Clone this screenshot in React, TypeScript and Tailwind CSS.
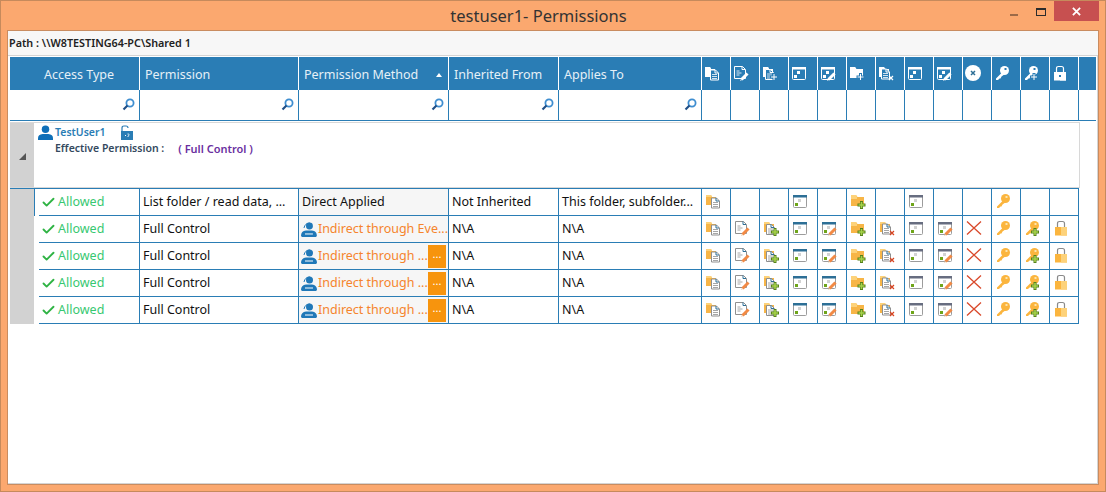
import type { ReactNode } from "react";
import { Check } from "lucide-react";

const BLUE = "#2a7db5";
const headCols = "grid grid-cols-[130px_159px_150px_110px_143px_repeat(13,29px)_17px]";
const rowCols = "grid grid-cols-[106px_159px_150px_110px_143px_repeat(13,29px)]";

type IconProps = { h?: boolean };

function Svg({ children, className = "w-4 h-4" }: { children: ReactNode; className?: string }) {
  return (
    <svg viewBox="0 0 16 16" className={className}>
      {children}
    </svg>
  );
}

function Folder({ h, big }: IconProps & { big?: boolean }) {
  const fill = h ? "#fff" : "#f7b547";
  const top = h ? "#fff" : "#fdd27a";
  return big ? (
    <>
      <path d="M1 2h5l1.500 2H14v9H1z" fill={fill} />
      <path d="M1 2h5l1 2v2H1z" fill={top} />
    </>
  ) : (
    <>
      <path d="M1 2h5l1 2h4v8H1z" fill={fill} />
      <path d="M1 2h5l1 2H1z" fill={top} />
    </>
  );
}

function Doc({ h, x = 6, y = 5 }: IconProps & { x?: number; y?: number }) {
  const line = h ? "#fff" : "#8f8f8f";
  return (
    <g transform={`translate(${x} ${y})`}>
      <path d="M.5.5h5l3 3v7h-8z" fill={h ? BLUE : "#fff"} stroke={line} />
      <path d="M5 .5v3h3" fill="none" stroke={h ? "#fff" : "#2d6f96"} />
      <path d="M2 5h5M2 7h5M2 9h5" stroke={line} strokeWidth=".8" />
    </g>
  );
}

function Plus({ h, x = 8, y = 8 }: IconProps & { x?: number; y?: number }) {
  return (
    <g transform={`translate(${x} ${y})`}>
      <path d="M2.500 0h3v2.500h2.500v3h-2.500v2.500h-3v-2.500h-2.500v-3h2.500z" fill={h ? BLUE : "#55801c"} />
      <path d="M4 1v6M1 4h6" stroke={h ? "#fff" : "#a5d14a"} strokeWidth={h ? 1 : 1.600} fill="none" />
    </g>
  );
}

function Pencil({ h }: IconProps) {
  return (
    <>
      <path d="M8.500 14.500l6-6" stroke={h ? "#fff" : "#f28a45"} strokeWidth="3" />
      <path d="M7 16l1-2 1 1z" fill={h ? "#fff" : "#e9c39c"} />
    </>
  );
}

function FolderDoc({ h }: IconProps) {
  return (
    <Svg>
      <Folder h={h} />
      <Doc h={h} x={6} y={4.500} />
    </Svg>
  );
}

function EditDoc({ h }: IconProps) {
  return (
    <Svg>
      <path d="M1.500 1.500h8l3 3v9h-11z" fill={h ? BLUE : "#fff"} stroke={h ? "#fff" : "#8f8f8f"} />
      <path d="M9 1.500v3h3" fill="none" stroke={h ? "#fff" : "#2d6f96"} />
      <path d="M3.500 6h3M3.500 8h5M3.500 10h3" stroke={h ? "#fff" : "#8f8f8f"} strokeWidth=".8" />
      <Pencil h={h} />
    </Svg>
  );
}

function DocPlus({ h }: IconProps) {
  return (
    <Svg>
      <Folder h={h} />
      <Doc h={h} x={3} y={4} />
      <Plus h={h} x={8} y={8} />
    </Svg>
  );
}

function Win({ h, gray, edit }: IconProps & { gray?: boolean; edit?: boolean }) {
  const frame = h ? "#fff" : "#9c9c9c";
  const bar = h ? "#fff" : gray ? "#676d80" : "#2d6f96";
  return (
    <Svg>
      <rect x="1.500" y="2.500" width="13" height="12" rx="1" fill={h ? BLUE : "#fff"} stroke={frame} />
      <rect x="1" y="2" width="14" height="2.500" fill={bar} />
      <rect x="6" y="6" width="3" height="3" fill={h ? "#fff" : "#d2d2d2"} />
      <rect x="3" y="10" width="3" height="3" fill={h ? "#fff" : "#6fa51a"} />
      {edit && <Pencil h={h} />}
    </Svg>
  );
}

function FolderPlus({ h }: IconProps) {
  return (
    <Svg>
      <Folder h={h} big />
      <Plus h={h} x={7.500} y={8} />
    </Svg>
  );
}

function DocX({ h }: IconProps) {
  return (
    <Svg>
      <Folder h={h} />
      <Doc h={h} x={3} y={3.500} />
      <path d="M11 11l4 4M15 11l-4 4" stroke={h ? "#fff" : "#d8431f"} strokeWidth="1.200" />
    </Svg>
  );
}

function Cross({ h }: IconProps) {
  return h ? (
    <Svg>
      <circle cx="8" cy="8" r="8" fill="#fff" />
      <path d="M6 6l4 4M10 6l-4 4" stroke="#2d6f96" strokeWidth="1.500" />
    </Svg>
  ) : (
    <Svg>
      <path d="M1 1.500l14 13M15 1.500l-14 13" stroke="#d9492b" strokeWidth="1.300" />
    </Svg>
  );
}

function Key({ h, plus }: IconProps & { plus?: boolean }) {
  const fill = h ? "#fff" : "#fbb53e";
  return (
    <Svg>
      <circle cx="10.500" cy="5.500" r="4.500" fill={fill} />
      <path d="M8 7.500L2 13.500v1.500h2l1.500-1.500h1l1-2L11 9z" fill={fill} />
      <rect x="10.500" y="3" width="2" height="2" fill={h ? BLUE : "#fde5ae"} />
      {plus && <Plus h={h} x={7} y={8} />}
    </Svg>
  );
}

function Lock({ h }: IconProps) {
  return (
    <Svg>
      <path d="M4.500 8V3.500q0-2 2-2h3q2 0 2 2V8" fill="none" stroke={h ? "#fff" : "#8a8a8a"} strokeWidth="1.200" />
      <rect x="2" y="7" width="12" height="8.500" fill={h ? "#fff" : "#fbb53e"} />
      <rect x="8" y="7" width="6" height="8.500" fill={h ? "#fff" : "#fdd27a"} />
      {h && <rect x="7" y="10" width="2" height="2" fill={BLUE} />}
    </Svg>
  );
}

function SearchGlyph() {
  return (
    <svg viewBox="0 0 13 13" className="w-[13px] h-[13px]">
      <circle cx="8" cy="5" r="3.600" fill="#fff" stroke="#3f8ed0" strokeWidth="1.800" />
      <path d="M5.500 7.500L1.500 11.500" stroke="#1f4e86" strokeWidth="2.200" />
    </svg>
  );
}

function UserGlyph() {
  return (
    <svg viewBox="0 0 16 16" className="w-[15px] h-[15px]">
      <circle cx="8" cy="4.500" r="4" fill="#0f6fb8" />
      <path d="M0 16v-2q0-4 5-4.500h6q5 .5 5 4.500v2z" fill="#0f6fb8" />
    </svg>
  );
}

function GroupUserGlyph() {
  return (
    <svg viewBox="0 0 16 15" className="w-4 h-[15px]">
      <circle cx="8.500" cy="4" r="3.500" fill="#1f78b8" />
      <path d="M3 6q1-5 6-5" stroke="#1f78b8" strokeWidth="1" fill="none" />
      <path d="M0 14q0-5 5-5.500h6q5 .5 5 5.500l-1 1h-14z" fill="#1f78b8" />
      <path d="M4 12h8" stroke="#fff" strokeWidth="1" />
    </svg>
  );
}

function OpenLock() {
  return (
    <svg viewBox="0 0 13 15" className="w-[13px] h-[15px]">
      <path d="M2 6V3q0-2 2-2h2q2 0 2 2" fill="none" stroke="#2a7db5" strokeWidth="1.200" />
      <rect x="1" y="6" width="12" height="9" fill="#2a7db5" />
      <path d="M5 10.500h1" stroke="#fff" />
      <path d="M7.500 9q1.500-.5 1.500.7t-1 1.300v1" fill="none" stroke="#fff" strokeWidth=".8" />
    </svg>
  );
}

const iconSet = (h?: boolean): ReactNode[] => [
  <FolderDoc h={h} />,
  <EditDoc h={h} />,
  <DocPlus h={h} />,
  <Win h={h} />,
  <Win h={h} edit />,
  <FolderPlus h={h} />,
  <DocX h={h} />,
  <Win h={h} gray />,
  <Win h={h} gray edit />,
  <Cross h={h} />,
  <Key h={h} />,
  <Key h={h} plus />,
  <Lock h={h} />,
];

const rows = [
  { perm: "List folder / read data, ...", method: "Direct Applied", kind: "direct", from: "Not Inherited", applies: "This folder, subfolder...", show: [0, 3, 5, 7, 10] },
  { perm: "Full Control", method: "Indirect through Eve...", kind: "plain", from: "N\\A", applies: "N\\A" },
  { perm: "Full Control", method: "Indirect through ...", kind: "more", from: "N\\A", applies: "N\\A" },
  { perm: "Full Control", method: "Indirect through ...", kind: "more", from: "N\\A", applies: "N\\A" },
  { perm: "Full Control", method: "Indirect through ...", kind: "more", from: "N\\A", applies: "N\\A" },
];

function Row({ row, first }: { row: (typeof rows)[number]; first: boolean }) {
  const icons = iconSet();
  const cell = "h-[27px] border-r border-b border-[#2a7db5] flex items-center overflow-hidden whitespace-nowrap";
  return (
    <div className={rowCols}>
      <div className={`h-[27px] flex ${first ? "border-l border-[#2a7db5] pl-[4px]" : "pl-[5px]"}`}>
        <div className="flex-1 border-r border-b border-[#2a7db5] flex items-center pl-[2px] text-[#37c871]">
          <Check className="w-[15px] h-[15px] text-[#2fb344] mr-[2px]" strokeWidth={3} />
          <span className="pt-[1px]">Allowed</span>
        </div>
      </div>
      <div className={`${cell} pl-[3px] pt-[1px] text-[#111]`}>{row.perm}</div>
      <div className={`${cell} pl-[2px] bg-[#f6f6f6]`}>
        {row.kind === "direct" ? (
          <span className="pl-[1px] pt-[1px] text-[#111]">{row.method}</span>
        ) : (
          <div className="flex items-center w-full">
            <GroupUserGlyph />
            <span className="ml-[1px] pt-[1px] text-[#f5842c]">{row.method}</span>
            {row.kind === "more" && (
              <div className="ml-auto mr-[2px] w-[18px] h-[23px] bg-[#f7940d] text-white flex items-center justify-center text-[11px] leading-none pb-[6px]">
                ...
              </div>
            )}
          </div>
        )}
      </div>
      <div className={`${cell} pl-[3px] pt-[1px] text-[#111]`}>{row.from}</div>
      <div className={`${cell} pl-[3px] pt-[1px] text-[#111]`}>{row.applies}</div>
      {icons.map((icon, i) => (
        <div key={i} className={`${cell} pl-[3px] pb-[2px]`}>
          {(!row.show || row.show.includes(i)) && icon}
        </div>
      ))}
    </div>
  );
}

export default function App() {
  const headIcons = iconSet(true);
  const headers = ["Access Type", "Permission", "Permission Method", "Inherited From", "Applies To"];
  return (
    <div className="w-[1106px] h-[492px] border border-[#c68a5c] bg-[#fba86f] flex flex-col font-['Noto_Sans','Open_Sans',sans-serif] text-[12.500px] overflow-hidden">
      {/* Title bar */}
      <div className="h-[29px] flex shrink-0">
        <div className="flex-1 pl-[66px] pt-[4px] text-center text-[16.500px] leading-[22px] text-[#333]">
          testuser1- Permissions
        </div>
        <div className="flex items-start">
          <div className="w-[8px] h-[2px] mt-[13px] bg-[#9c6a48]" />
          <div className="w-[10px] h-[8px] mt-[7px] ml-[18px] border border-[#2c2c2c] border-t-[2px]" />
          <div className="w-[45px] h-[20px] ml-[8px] mr-[6px] bg-[#c75050] flex items-center justify-center text-white">
            <svg viewBox="0 0 10 10" className="w-[9px] h-[9px]">
              <path d="M1 1l8 8M9 1l-8 8" stroke="#fff" strokeWidth="2" />
            </svg>
          </div>
        </div>
      </div>

      {/* Content */}
      <div className="mx-[6px] h-[455px] border border-[#c98c60] bg-white shadow-[inset_-1px_-1px_0_#d4d4d4] flex flex-col">
        <div className="h-[25px] shrink-0 bg-[#f7f7f7] border-b border-[#d4d4d4] pl-[1px] flex items-center text-[10.800px] font-semibold text-[#222]">
          Path : \\W8TESTING64-PC\Shared 1
        </div>
        <div className="pl-[2px] pt-[1px]">
          {/* Header */}
          <div className={`${headCols} w-[1086px] h-[33px] bg-[#2a7db5] text-[#e6f0f7]`}>
            {headers.map((title, i) => (
              <div
                key={title}
                className={`flex items-center border-r border-white pt-[3px] ${i === 0 ? "pl-[34px]" : "pl-[5px]"}`}
              >
                {title}
                {i === 2 && (
                  <svg viewBox="0 0 6 4" className="w-[6px] h-[4px] ml-[18px]">
                    <path d="M3 0l3 4H0z" fill="#fff" />
                  </svg>
                )}
              </div>
            ))}
            {headIcons.map((icon, i) => (
              <div key={i} className="flex items-center pl-[2px] pb-[1px] border-r border-white">
                {icon}
              </div>
            ))}
            <div />
          </div>

          {/* Filters */}
          <div className={`${headCols} w-[1086px] h-[31px] border-b border-[#2a7db5]`}>
            {headers.map((title) => (
              <div key={title} className="flex items-center justify-end pr-[4px] pb-[1px] border-r border-[#2a7db5]">
                <SearchGlyph />
              </div>
            ))}
            {headIcons.map((_, i) => (
              <div key={i} className="border-r border-[#2a7db5]" />
            ))}
            <div />
          </div>

          {/* Group row */}
          <div className="w-[1070px] h-[66px] mt-[1px] flex border-t border-r border-b border-[#d8d8d8]">
            <div className="w-[24px] bg-[#d2d2d2] flex items-center justify-center pt-[3px] pl-[1px]">
              <svg viewBox="0 0 7 7" className="w-[7px] h-[7px]">
                <path d="M7 0v7H0z" fill="#555" />
              </svg>
            </div>
            <div className="flex-1 pl-[4px]">
              <div className="flex items-center h-[19px]">
                <UserGlyph />
                <span className="ml-[2px] text-[10.500px] font-semibold text-[#2a7db5]">TestUser1</span>
                <span className="ml-[14px]">
                  <OpenLock />
                </span>
              </div>
              <div className="flex items-center pl-[17px] h-[14px] text-[10.500px] font-semibold text-[#34495e]">
                Effective Permission :<span className="ml-[14px] text-[11px] text-[#6a2fa0]">( Full Control )</span>
              </div>
            </div>
          </div>

          {/* Rows */}
          <div className="w-[1069px] border-t border-[#2a7db5] flex">
            <div className="w-[24px] bg-[#d2d2d2]" />
            <div>
              {rows.map((row, i) => (
                <Row key={i} row={row} first={i === 0} />
              ))}
            </div>
          </div>
        </div>
      </div>
    </div>
  );
}
